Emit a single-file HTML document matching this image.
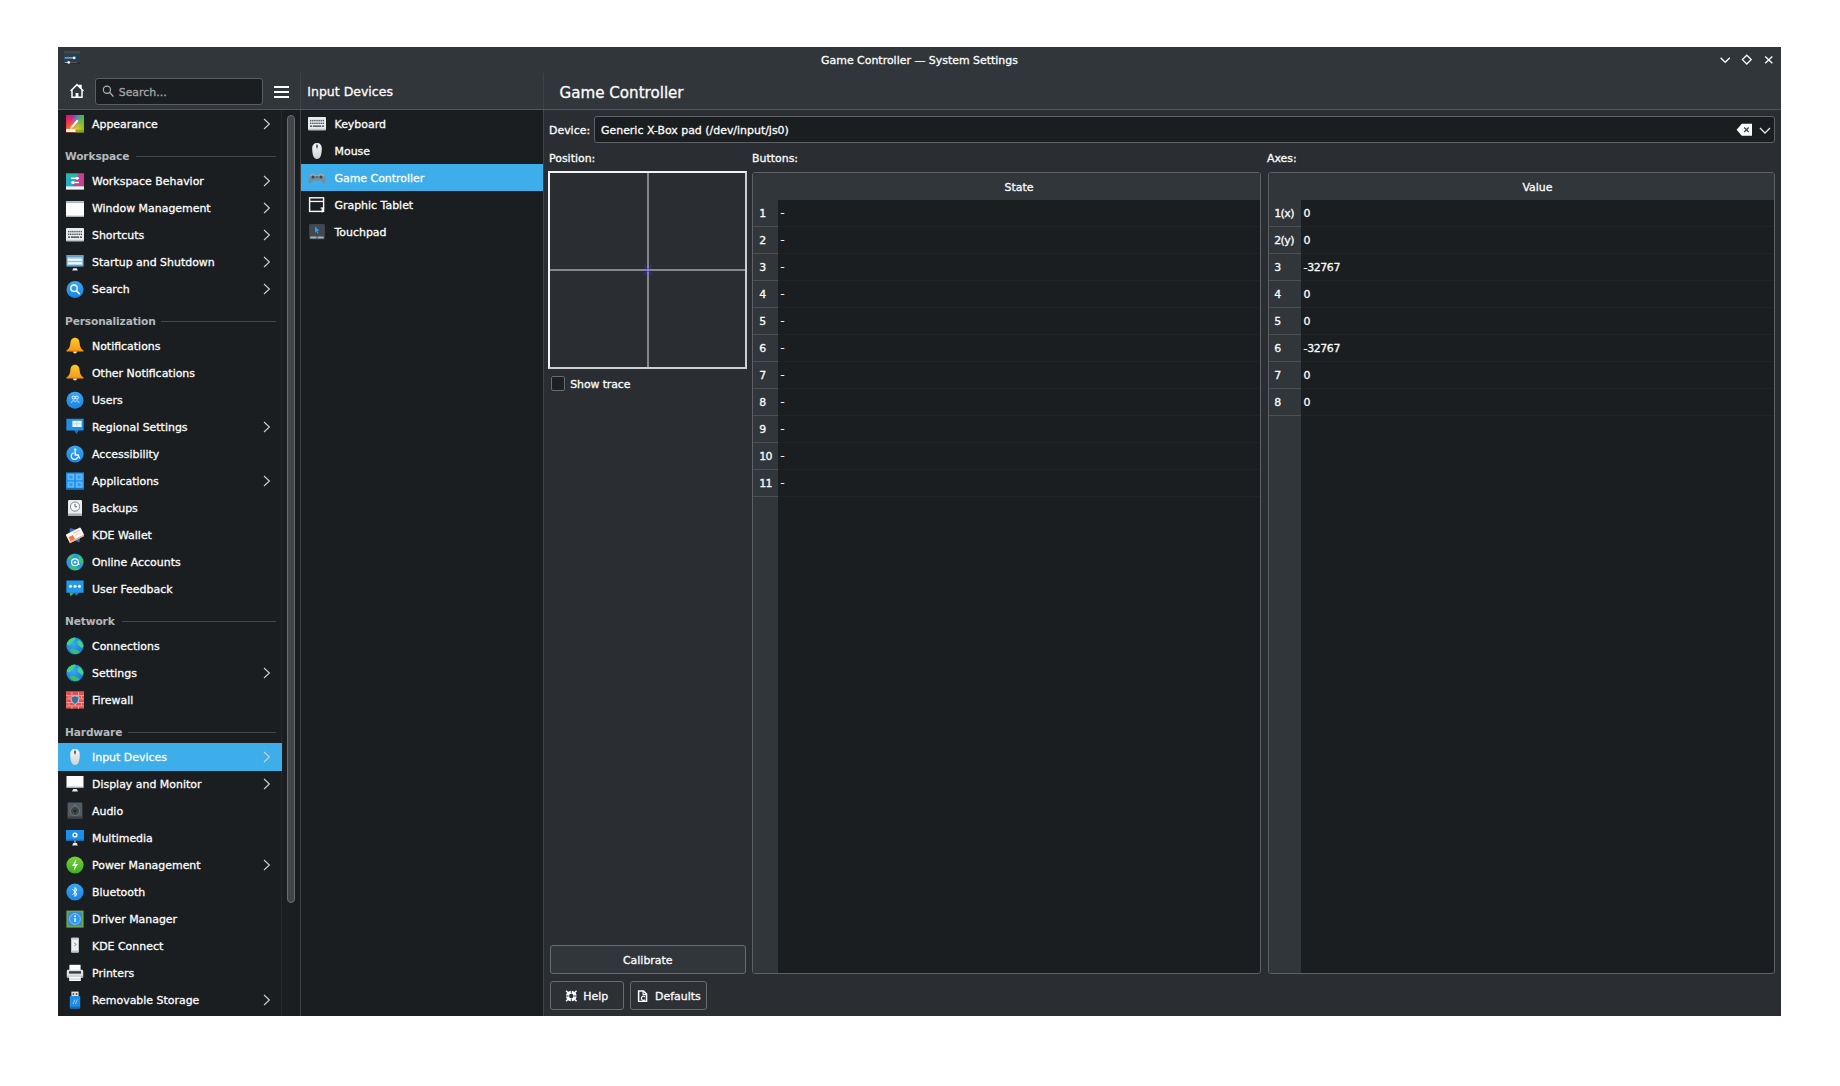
<!DOCTYPE html><html><head><meta charset="utf-8"><title>Game Controller — System Settings</title><style>
*{box-sizing:border-box;margin:0;padding:0}
html,body{width:1840px;height:1086px;background:#fff;overflow:hidden}
body{font-family:"DejaVu Sans","Liberation Sans",sans-serif;font-size:10.95px;color:#fcfcfc;position:relative}
.abs{position:absolute}
#win{position:absolute;left:58px;top:47px;width:1723px;height:969px;background:#2a2e32;overflow:hidden}
.t{position:absolute;white-space:nowrap;line-height:16px;height:16px;-webkit-text-stroke:0.3px}
.row{position:absolute;left:0;height:27px}
.row svg{position:absolute;left:8px;top:4.9px}
.row .t{left:34px;top:6.75px}
.row svg.chev{position:absolute;top:7.6px}
.sec{position:absolute;left:0;height:30px}
.sec .t{left:7px;top:12.25px;font-weight:bold;font-size:10.65px;letter-spacing:-0.15px;color:#b4b8bb;-webkit-text-stroke:0}
.sec i{position:absolute;top:19px;height:1px;background:#43464a;right:6px}
.sel{background:#3daee9}
.btn{position:absolute;border:1px solid #686b6f;border-radius:3px;background:#31363b}
</style></head><body>
<svg width="0" height="0" style="position:absolute"><defs>
<linearGradient id="gApTop" x1="0" y1="0" x2="1" y2="0"><stop offset="0" stop-color="#ea0f7e"/><stop offset=".3" stop-color="#d51a8c"/><stop offset=".5" stop-color="#7c55c6"/><stop offset=".68" stop-color="#4f8fb0"/><stop offset=".85" stop-color="#4bb24e"/><stop offset="1" stop-color="#58b846"/></linearGradient>
<linearGradient id="gApBot" x1="0" y1="0" x2="1" y2="0"><stop offset="0" stop-color="#f4541f"/><stop offset=".35" stop-color="#f28a1a"/><stop offset=".6" stop-color="#e9cc18"/><stop offset="1" stop-color="#86c425"/></linearGradient>
<linearGradient id="gApM" x1="0" y1="0" x2="0" y2="1"><stop offset="0.1" stop-color="#000"/><stop offset=".75" stop-color="#fff"/></linearGradient>
<mask id="mAp" maskUnits="userSpaceOnUse" x="0" y="0" width="18" height="18"><rect x="0" y="0" width="18" height="18" fill="url(#gApM)"/></mask>

<linearGradient id="gBlueC" x1="0" y1="0" x2="0" y2="1"><stop offset="0" stop-color="#3aa6f2"/><stop offset="1" stop-color="#1b84e6"/></linearGradient>

<linearGradient id="gBell" x1="0" y1="0" x2="0" y2="1"><stop offset="0" stop-color="#fdc92b"/><stop offset="1" stop-color="#f59a18"/></linearGradient>

<radialGradient id="gGlobe" cx=".4" cy=".35" r=".75"><stop offset="0" stop-color="#38a9f5"/><stop offset="1" stop-color="#1671d4"/></radialGradient>

<linearGradient id="gMouse" x1="0" y1="0" x2="0" y2="1"><stop offset="0" stop-color="#f7f7f8"/><stop offset="1" stop-color="#cfd3d6"/></linearGradient>

<linearGradient id="gGreenC" x1="0" y1="0" x2="0" y2="1"><stop offset="0" stop-color="#76d23a"/><stop offset="1" stop-color="#3fae22"/></linearGradient>
</defs></svg>
<div id="win">
<div class="abs" style="left:0;top:0;width:1723px;height:63px;background:#31363b"></div>
<div class="abs" style="left:0;top:62px;width:1723px;height:1px;background:#53575b"></div>
<div class="t" style="left:0;width:1723px;text-align:center;top:5.75px">Game Controller — System Settings</div>
<svg class="abs" style="left:5.5px;top:3.6px" width="16.3" height="13.5" viewBox="0 0 16.3 13.5"><rect x="0" y="0" width="16.3" height="13.5" rx="1" fill="#22404f"/><rect x="0" y="0" width="16.3" height="2.6" rx=".8" fill="#454748"/><rect x="0" y="11.3" width="16.3" height="2.2" rx=".8" fill="#1c2f3a"/><rect x="0.7" y="6.4" width="9.6" height="1" fill="#b9d6e6"/><circle cx="10.2" cy="6.9" r="1.35" fill="#eef6fa"/><rect x="0.7" y="10.95" width="5" height="1" fill="#7fb3c6"/><rect x="5" y="10.95" width="8" height="1" fill="#6d5456"/><circle cx="4.7" cy="11.45" r="1.35" fill="#eef6fa"/></svg>
<svg class="abs" style="left:1658px;top:5px" width="62" height="16" viewBox="0 0 62 16"><path d="M4.6 5.7 L9.2 10.3 L13.8 5.7" fill="none" stroke="#fcfcfc" stroke-width="1.3"/><path d="M30.8 3.2 L35.2 7.6 L30.8 12 L26.4 7.6 Z" fill="none" stroke="#fcfcfc" stroke-width="1.3"/><path d="M49.2 4.6 L56.3 11.2 M56.3 4.6 L49.2 11.2" fill="none" stroke="#fcfcfc" stroke-width="1.35"/></svg>
<svg class="abs" style="left:11px;top:36px" width="16" height="16" viewBox="0 0 16 16"><path d="M1.6 8 L8 1.6 L14.4 8 M3 7 V14.2 H13 V7 M10.6 3.8 V2.4 H12 V5.2" fill="none" stroke="#fcfcfc" stroke-width="1.5" stroke-linejoin="miter"/><rect x="6.6" y="10" width="2.8" height="4" fill="#fcfcfc"/></svg>
<div class="abs" style="left:37px;top:31px;width:168px;height:27px;background:#1b1e20;border:1px solid #5a5d61;border-radius:3px"></div>
<svg class="abs" style="left:44px;top:37.6px" width="13" height="13" viewBox="0 0 13 13"><circle cx="4.9" cy="4.7" r="3.6" fill="none" stroke="#afb2b4" stroke-width="1.15"/><path d="M7.5 7.3 L11.5 11.6" stroke="#afb2b4" stroke-width="1.3"/></svg>
<div class="t" style="left:60.7px;top:37.75px;color:#a4a7a9">Search...</div>
<div class="abs" style="left:216px;top:39px;width:15px;height:2px;background:#fcfcfc;box-shadow:0 5px 0 #fcfcfc,0 10px 0 #fcfcfc"></div>
<div class="abs" style="left:242px;top:26px;width:1px;height:36px;background:#3e4247"></div>
<div class="abs" style="left:485px;top:26px;width:1px;height:36px;background:#3e4247"></div>
<div class="t" style="left:249.3px;top:34.75px;font-size:12.5px;line-height:20px;height:20px">Input Devices</div>
<div class="t" style="left:501.6px;top:34.25px;font-size:15.1px;line-height:24px;height:24px">Game Controller</div>
<div class="abs" style="left:0;top:63px;width:242px;height:906px;background:#1b1e20"></div>
<div class="abs" style="left:223px;top:63px;width:1px;height:906px;background:#272b2e"></div>
<div class="abs" style="left:242px;top:63px;width:1px;height:906px;background:#404448"></div>
<div class="abs" style="left:229px;top:68px;width:8px;height:788px;border:1px solid #686c70;border-radius:4px;background:#414548"></div>
<div class="row" style="top:63px;width:224px"><svg width="18" height="18" viewBox="0 0 18 18" style="">
<rect x="0" y="0" width="18" height="17.3" fill="url(#gApTop)"/>
<rect x="0" y="0" width="18" height="17.3" fill="url(#gApBot)" mask="url(#mAp)"/>
<path d="M5.4 11 L11 4.7 L12.5 6 L7 12.4 Z" fill="#fff"/>
<path d="M4.2 13.4 Q4.7 11 6 11.1 Q7.6 12.6 5.6 13.7 Z" fill="#fff0d8"/>
<rect x="0.2" y="13.9" width="9.4" height="3.1" fill="#fff" opacity=".92"/>
<rect x="9.6" y="14.6" width="8.4" height="2.7" fill="#8e9a1c" opacity=".75"/>
</svg><span class="t">Appearance</span><svg class="chev" style="left:205px" width="8" height="12" viewBox="0 0 8 12"><path d="M1 1 L6.4 6 L1 11" fill="none" stroke="#cfd1d3" stroke-width="1.1"/></svg></div>
<div class="sec" style="top:90px;width:224px"><span class="t">Workspace</span><i style="left:77.5px"></i></div>
<div class="row" style="top:120px;width:224px"><svg width="18" height="18" viewBox="0 0 18 18" style="">
<rect x="0" y="1.6" width="18" height="15.9" fill="#2aa9c4"/>
<path d="M12.4 1.6 H18 V14.4 H6.4 Z" fill="#c4428f"/>
<path d="M0 1.6 H12.4 L9.6 6 H0 Z" fill="#2bb7a8"/>
<rect x="0" y="14.4" width="18" height="3.1" fill="#f1f3f5"/>
<rect x="5" y="5.6" width="8" height="1.4" fill="#fff"/><circle cx="11" cy="6.3" r="1.5" fill="#fff"/>
<rect x="5" y="9.8" width="8" height="1.4" fill="#fff"/><circle cx="7" cy="10.5" r="1.5" fill="#fff"/>
</svg><span class="t">Workspace Behavior</span><svg class="chev" style="left:205px" width="8" height="12" viewBox="0 0 8 12"><path d="M1 1 L6.4 6 L1 11" fill="none" stroke="#cfd1d3" stroke-width="1.1"/></svg></div>
<div class="row" style="top:147px;width:224px"><svg width="18" height="18" viewBox="0 0 18 18" style="">
<rect x="0" y="2.2" width="18" height="15.3" fill="#fdfdfd"/>
<rect x="0" y="2.2" width="18" height="1.9" fill="#a9bccb"/>
<rect x="0" y="16.3" width="18" height="1.2" fill="#d0d6db"/>
</svg><span class="t">Window Management</span><svg class="chev" style="left:205px" width="8" height="12" viewBox="0 0 8 12"><path d="M1 1 L6.4 6 L1 11" fill="none" stroke="#cfd1d3" stroke-width="1.1"/></svg></div>
<div class="row" style="top:174px;width:224px"><svg width="18" height="18" viewBox="0 0 18 18" style="">
<rect x="0" y="2" width="18" height="13.2" rx="1" fill="#e9ecee"/>
<rect x="0" y="13.8" width="18" height="1.4" rx=".6" fill="#bcc3c8"/>
<rect x="2" y="4.9" width="1.4" height="1.4" fill="#4d5459"/><rect x="4.1" y="4.9" width="1.4" height="1.4" fill="#4d5459"/><rect x="6.2" y="4.9" width="1.4" height="1.4" fill="#4d5459"/><rect x="8.3" y="4.9" width="1.4" height="1.4" fill="#4d5459"/><rect x="10.4" y="4.9" width="1.4" height="1.4" fill="#4d5459"/><rect x="12.5" y="4.9" width="1.4" height="1.4" fill="#4d5459"/><rect x="14.6" y="4.9" width="1.4" height="1.4" fill="#4d5459"/><rect x="2" y="7.6" width="1.4" height="1.4" fill="#4d5459"/><rect x="4.1" y="7.6" width="1.4" height="1.4" fill="#4d5459"/><rect x="6.2" y="7.6" width="1.4" height="1.4" fill="#4d5459"/><rect x="8.3" y="7.6" width="1.4" height="1.4" fill="#4d5459"/><rect x="10.4" y="7.6" width="1.4" height="1.4" fill="#4d5459"/><rect x="12.5" y="7.6" width="1.4" height="1.4" fill="#4d5459"/><rect x="14.6" y="7.6" width="1.4" height="1.4" fill="#4d5459"/>
<rect x="2" y="10.4" width="2.2" height="1.5" fill="#4d5459"/><rect x="5" y="10.4" width="8" height="1.5" fill="#4d5459"/><rect x="13.8" y="10.4" width="2.2" height="1.5" fill="#4d5459"/>
</svg><span class="t">Shortcuts</span><svg class="chev" style="left:205px" width="8" height="12" viewBox="0 0 8 12"><path d="M1 1 L6.4 6 L1 11" fill="none" stroke="#cfd1d3" stroke-width="1.1"/></svg></div>
<div class="row" style="top:201px;width:224px"><svg width="18" height="18" viewBox="0 0 18 18" style="">
<rect x="0.5" y="2" width="17" height="11.6" rx=".8" fill="#8ec4e8"/>
<rect x="0.5" y="2" width="17" height="2" fill="#6c9dc2"/>
<rect x="2" y="5.6" width="14" height="2.2" fill="#f1f7fb"/>
<rect x="2" y="9.2" width="14" height="2.2" fill="#f1f7fb"/>
<rect x="0.5" y="12.6" width="17" height="1" fill="#3f6f94"/>
<path d="M7.2 15.2 H10.8 L11.8 17.4 H6.2 Z" fill="#e4e8eb"/>
</svg><span class="t">Startup and Shutdown</span><svg class="chev" style="left:205px" width="8" height="12" viewBox="0 0 8 12"><path d="M1 1 L6.4 6 L1 11" fill="none" stroke="#cfd1d3" stroke-width="1.1"/></svg></div>
<div class="row" style="top:228px;width:224px"><svg width="18" height="18" viewBox="0 0 18 18" style="">
<circle cx="9" cy="9.4" r="8.5" fill="url(#gBlueC)"/>
<circle cx="8" cy="8.2" r="3.2" fill="none" stroke="#fff" stroke-width="1.3"/>
<path d="M10.3 10.6 L13.4 13.8" stroke="#fff" stroke-width="1.6" stroke-linecap="round"/>
</svg><span class="t">Search</span><svg class="chev" style="left:205px" width="8" height="12" viewBox="0 0 8 12"><path d="M1 1 L6.4 6 L1 11" fill="none" stroke="#cfd1d3" stroke-width="1.1"/></svg></div>
<div class="sec" style="top:255px;width:224px"><span class="t">Personalization</span><i style="left:103px"></i></div>
<div class="row" style="top:285px;width:224px"><svg width="18" height="18" viewBox="0 0 18 18" style="">
<path d="M9 0.8 C6 0.8 4.6 3.2 4.4 6 C4.2 9.4 3.2 11.4 0.6 13.4 L0.6 14.2 H17.4 L17.4 13.4 C14.8 11.4 13.8 9.4 13.6 6 C13.4 3.2 12 0.8 9 0.8 Z" fill="url(#gBell)"/>
<path d="M0.6 13.2 H17.4 V14.4 H0.6 Z" fill="#f08a12"/>
<path d="M7 14.6 H11 A2 2 0 0 1 7 14.6 Z" fill="#f6e6cf"/>
</svg><span class="t">Notifications</span></div>
<div class="row" style="top:312px;width:224px"><svg width="18" height="18" viewBox="0 0 18 18" style="">
<path d="M9 0.8 C6 0.8 4.6 3.2 4.4 6 C4.2 9.4 3.2 11.4 0.6 13.4 L0.6 14.2 H17.4 L17.4 13.4 C14.8 11.4 13.8 9.4 13.6 6 C13.4 3.2 12 0.8 9 0.8 Z" fill="url(#gBell)"/>
<path d="M0.6 13.2 H17.4 V14.4 H0.6 Z" fill="#f08a12"/>
<path d="M7 14.6 H11 A2 2 0 0 1 7 14.6 Z" fill="#f6e6cf"/>
</svg><span class="t">Other Notifications</span></div>
<div class="row" style="top:339px;width:224px"><svg width="18" height="18" viewBox="0 0 18 18" style="">
<circle cx="9" cy="9.2" r="8.5" fill="url(#gBlueC)"/>
<circle cx="7.6" cy="6.6" r="1.5" fill="none" stroke="#fff" stroke-width=".9"/>
<circle cx="10.8" cy="6.6" r="1.5" fill="none" stroke="#fff" stroke-width=".9"/>
<path d="M5.4 11.8 C5.6 9.4 8.8 9.4 9.2 10.8 C9.6 9.4 12.8 9.4 13 11.8" fill="none" stroke="#cfe8ff" stroke-width=".9"/>
</svg><span class="t">Users</span></div>
<div class="row" style="top:366px;width:224px"><svg width="18" height="18" viewBox="0 0 18 18" style="">
<path d="M0.4 0.8 H17.6 V12.4 H12.2 L10.4 15.8 L8.6 12.4 H0.4 Z" fill="#1f8fe8"/>
<path d="M10.4 15.8 L8.6 12.4 H12.2 Z" fill="#1872c4"/>
<rect x="6.4" y="2.8" width="9.2" height="6.2" fill="#f3f8fd"/>
<rect x="6.4" y="5.5" width="9.2" height=".7" fill="#9ccbf3"/><rect x="10.6" y="2.8" width=".7" height="6.2" fill="#9ccbf3"/>
</svg><span class="t">Regional Settings</span><svg class="chev" style="left:205px" width="8" height="12" viewBox="0 0 8 12"><path d="M1 1 L6.4 6 L1 11" fill="none" stroke="#cfd1d3" stroke-width="1.1"/></svg></div>
<div class="row" style="top:393px;width:224px"><svg width="18" height="18" viewBox="0 0 18 18" style="">
<circle cx="9" cy="9" r="8.6" fill="url(#gBlueC)"/>
<circle cx="9.3" cy="4.6" r="1.2" fill="#fff"/>
<path d="M9.2 6.4 V10 H12.2 L13.4 13" fill="none" stroke="#fff" stroke-width="1.3" stroke-linecap="round" stroke-linejoin="round"/>
<path d="M7.4 8 A3.3 3.3 0 1 0 11.6 12.2" fill="none" stroke="#fff" stroke-width="1.2" stroke-linecap="round"/>
</svg><span class="t">Accessibility</span></div>
<div class="row" style="top:420px;width:224px"><svg width="18" height="18" viewBox="0 0 18 18" style="">
<rect x="0" y="0.5" width="18" height="17" fill="#1d8fea"/>
<rect x="0" y="15.9" width="18" height="1.6" fill="#176fc0"/>
<rect x="1.5" y="1.9" width="6.7" height="6.3" fill="#5db7fb"/><rect x="9.8" y="1.9" width="6.7" height="6.3" fill="#5db7fb"/>
<rect x="1.5" y="9.6" width="6.7" height="6.1" fill="#5db7fb"/><rect x="9.8" y="9.6" width="6.7" height="6.1" fill="#5db7fb"/>
<rect x="3.3" y="3.6" width="3.1" height="2.9" fill="#2d9af0"/><rect x="11.6" y="3.6" width="3.1" height="2.9" fill="#2d9af0"/>
<rect x="3.3" y="11.2" width="3.1" height="2.9" fill="#2d9af0"/><rect x="11.6" y="11.2" width="3.1" height="2.9" fill="#2d9af0"/>
</svg><span class="t">Applications</span><svg class="chev" style="left:205px" width="8" height="12" viewBox="0 0 8 12"><path d="M1 1 L6.4 6 L1 11" fill="none" stroke="#cfd1d3" stroke-width="1.1"/></svg></div>
<div class="row" style="top:447px;width:224px"><svg width="18" height="18" viewBox="0 0 18 18" style="">
<rect x="2" y="1" width="14" height="16" rx="1.2" fill="#e9ebec"/>
<rect x="2" y="14.6" width="14" height="2.4" rx="1" fill="#a9adb0"/>
<circle cx="9" cy="7.6" r="4.6" fill="#fcfcfc" stroke="#85898c" stroke-width="1"/>
<path d="M9 4.8 V7.8 H11.2" fill="none" stroke="#60656a" stroke-width="1"/>
</svg><span class="t">Backups</span></div>
<div class="row" style="top:474px;width:224px"><svg width="18" height="18" viewBox="0 0 18 18" style="">
<path d="M4 2 L15 5 L13.4 16.4 L3 12 Z" fill="#2c72c7"/>
<g transform="rotate(-27 9 9)">
<rect x="0.8" y="4.4" width="16.4" height="9.6" rx="1" fill="#fbfbfb"/>
<rect x="2.2" y="8" width="5" height="4.6" fill="#f47a38"/>
<rect x="8.6" y="6.4" width="6.6" height="1" fill="#f7b48c"/>
<rect x="8.6" y="9" width="6.6" height="1" fill="#d9d9d9"/>
<rect x="0.8" y="12.6" width="16.4" height="1.4" fill="#f6a26e"/>
</g>
</svg><span class="t">KDE Wallet</span></div>
<div class="row" style="top:501px;width:224px"><svg width="18" height="18" viewBox="0 0 18 18" style="">
<circle cx="9" cy="9" r="8.6" fill="#2a98e6"/>
<path d="M2 5 C4 2 7 1 9 1.2 C8 3 6 4 6 6 C4.6 8 3 7.2 2 5 Z" fill="#39c16c"/>
<path d="M12.4 2 C15 3 17 6 17.4 9 C16 12 14 11 13.4 8 C13 6 11.4 4 12.4 2 Z" fill="#39c16c"/>
<path d="M3 13.2 C5 12 8 12.4 9.6 14 C12 14.4 13 15 13.4 16.2 C10 18.4 5 17.4 3 13.2 Z" fill="#39c16c"/>
<circle cx="9" cy="9.2" r="3.4" fill="none" stroke="#fff" stroke-width="1.2"/><circle cx="9" cy="9.2" r="1.2" fill="#fff"/><path d="M12.4 9.2 V10.6 Q12.4 11.8 13.6 11.4" fill="none" stroke="#fff" stroke-width="1"/>
</svg><span class="t">Online Accounts</span></div>
<div class="row" style="top:528px;width:224px"><svg width="18" height="18" viewBox="0 0 18 18" style="">
<path d="M3.4 12.6 H8.4 L4.6 16.6 Z" fill="#3fb84a"/>
<path d="M0.4 0.4 H17.6 V12.8 H12.8 L10.4 15.6 L8.2 12.8 H0.4 Z" fill="#239ae9"/>
<path d="M10.4 15.6 L8.2 12.8 H12.8 Z" fill="#1b78c8"/>
<circle cx="4.6" cy="6.2" r="1.5" fill="#fff"/><circle cx="9" cy="6.2" r="1.5" fill="#fff"/><circle cx="13.4" cy="6.2" r="1.5" fill="#fff"/>
</svg><span class="t">User Feedback</span></div>
<div class="sec" style="top:555px;width:224px"><span class="t">Network</span><i style="left:64px"></i></div>
<div class="row" style="top:585px;width:224px"><svg width="18" height="18" viewBox="0 0 18 18" style="">
<circle cx="9" cy="9" r="8.6" fill="url(#gGlobe)"/>
<path d="M2.2 4 C4 1.8 6.4 0.8 8.6 0.6 C10 1.6 9.4 3 7.6 3.8 C6.8 5.6 5.6 6.2 4.4 7.4 C3.4 8.8 1.8 8.4 0.8 7 C1 5.8 1.6 4.8 2.2 4 Z" fill="#3ed680"/>
<path d="M12.6 3.2 C14.6 3.6 16.6 5.6 17.4 8.4 C17.2 10.6 16 11.4 14.8 10.2 C13.6 9 12 8.6 11.6 6.8 C11.2 5.2 11.4 3.8 12.6 3.2 Z" fill="#3ed680"/>
<path d="M3.6 12.4 C5.6 11.2 8.6 11.6 10 13 C12 13.4 13.4 14 13.8 15.6 C11 18 6 17.8 3.6 12.4 Z" fill="#34c06e"/>
</svg><span class="t">Connections</span></div>
<div class="row" style="top:612px;width:224px"><svg width="18" height="18" viewBox="0 0 18 18" style="">
<circle cx="9" cy="9" r="8.6" fill="url(#gGlobe)"/>
<path d="M2.2 4 C4 1.8 6.4 0.8 8.6 0.6 C10 1.6 9.4 3 7.6 3.8 C6.8 5.6 5.6 6.2 4.4 7.4 C3.4 8.8 1.8 8.4 0.8 7 C1 5.8 1.6 4.8 2.2 4 Z" fill="#3ed680"/>
<path d="M12.6 3.2 C14.6 3.6 16.6 5.6 17.4 8.4 C17.2 10.6 16 11.4 14.8 10.2 C13.6 9 12 8.6 11.6 6.8 C11.2 5.2 11.4 3.8 12.6 3.2 Z" fill="#3ed680"/>
<path d="M3.6 12.4 C5.6 11.2 8.6 11.6 10 13 C12 13.4 13.4 14 13.8 15.6 C11 18 6 17.8 3.6 12.4 Z" fill="#34c06e"/>
</svg><span class="t">Settings</span><svg class="chev" style="left:205px" width="8" height="12" viewBox="0 0 8 12"><path d="M1 1 L6.4 6 L1 11" fill="none" stroke="#cfd1d3" stroke-width="1.1"/></svg></div>
<div class="row" style="top:639px;width:224px"><svg width="18" height="18" viewBox="0 0 18 18" style="">
<rect x="0" y="0.2" width="18" height="17.4" fill="#e0524f"/>
<rect x="0" y="4.1" width="18" height=".7" fill="#f4b6b0"/><rect x="0" y="7.6" width="18" height=".7" fill="#f4b6b0"/><rect x="0" y="11.1" width="18" height=".7" fill="#f4b6b0"/><rect x="0" y="14.6" width="18" height=".7" fill="#f4b6b0"/><rect x="5.6" y="1" width=".7" height="3" fill="#f4b6b0"/><rect x="12" y="1" width=".7" height="3" fill="#f4b6b0"/><rect x="2.6" y="4.6" width=".7" height="3" fill="#f4b6b0"/><rect x="9" y="4.6" width=".7" height="3" fill="#f4b6b0"/><rect x="15" y="4.6" width=".7" height="3" fill="#f4b6b0"/><rect x="5.6" y="8.1" width=".7" height="3" fill="#f4b6b0"/><rect x="12" y="8.1" width=".7" height="3" fill="#f4b6b0"/><rect x="2.6" y="11.6" width=".7" height="3" fill="#f4b6b0"/><rect x="9" y="11.6" width=".7" height="3" fill="#f4b6b0"/><rect x="15" y="11.6" width=".7" height="3" fill="#f4b6b0"/><rect x="5.6" y="15" width=".7" height="3" fill="#f4b6b0"/><rect x="12" y="15" width=".7" height="3" fill="#f4b6b0"/>
<path d="M9 4.6 C10.6 5.6 11.8 5.8 13 5.8 C13 9.6 11.6 12 9 13.4 C6.4 12 5 9.6 5 5.8 C6.2 5.8 7.4 5.6 9 4.6 Z" fill="#3b6d96" stroke="#c8d6e0" stroke-width=".8"/>
</svg><span class="t">Firewall</span></div>
<div class="sec" style="top:666px;width:224px"><span class="t">Hardware</span><i style="left:70px"></i></div>
<div class="abs sel" style="left:0;top:696.4px;width:224px;height:27.2px"></div>
<div class="row" style="top:696px;width:224px"><svg width="18" height="18" viewBox="0 0 18 18" style="">
<path d="M9 0.9 C11.8 0.9 13.8 2.9 13.8 6.2 C13.8 9.8 13.3 12.6 12.5 14.6 C11.9 16.2 10.5 16.9 9 16.9 C7.5 16.9 6.1 16.2 5.5 14.6 C4.7 12.6 4.2 9.8 4.2 6.2 C4.2 2.9 6.2 0.9 9 0.9 Z" fill="url(#gMouse)"/>
<path d="M8.6 1 H9.4 V7.6 H8.6 Z" fill="#b9bec2"/>
<rect x="8.1" y="2.4" width="1.8" height="3.6" rx=".9" fill="#555d63"/>
</svg><span class="t">Input Devices</span><svg class="chev" style="left:205px" width="8" height="12" viewBox="0 0 8 12"><path d="M1 1 L6.4 6 L1 11" fill="none" stroke="#cfd1d3" stroke-width="1.1"/></svg></div>
<div class="row" style="top:723px;width:224px"><svg width="18" height="18" viewBox="0 0 18 18" style="">
<rect x="0.5" y="1" width="17" height="11.6" rx=".6" fill="#fcfcfc"/>
<rect x="0.5" y="11.4" width="17" height="1.2" fill="#c3c8cc"/>
<path d="M7.2 14 H10.8 L12 16.4 H6 Z" fill="#e4e8eb"/>
</svg><span class="t">Display and Monitor</span><svg class="chev" style="left:205px" width="8" height="12" viewBox="0 0 8 12"><path d="M1 1 L6.4 6 L1 11" fill="none" stroke="#cfd1d3" stroke-width="1.1"/></svg></div>
<div class="row" style="top:750px;width:224px"><svg width="18" height="18" viewBox="0 0 18 18" style="">
<rect x="1.6" y="0.6" width="14.8" height="16" rx="1.2" fill="#545b61"/>
<rect x="1.6" y="14.6" width="14.8" height="2" rx="1" fill="#3b4146"/>
<circle cx="9" cy="9" r="4.6" fill="#3f464b" stroke="#6d747a" stroke-width=".9"/>
<circle cx="9" cy="9" r="1.7" fill="#23272a"/>
<circle cx="9" cy="2.8" r=".8" fill="#7b8389"/>
</svg><span class="t">Audio</span></div>
<div class="row" style="top:777px;width:224px"><svg width="18" height="18" viewBox="0 0 18 18" style="">
<rect x="0" y="1" width="18" height="10.6" fill="#1d8ee9"/>
<rect x="0" y="10.6" width="18" height="1" fill="#176fc0"/>
<circle cx="9" cy="6" r="2.6" fill="#fcfcfc"/>
<path d="M8.2 4.7 L10.6 6 L8.2 7.3 Z" fill="#2b3c4c"/>
<rect x="8.5" y="11.6" width="1" height="2.6" fill="#dfe3e6"/>
<path d="M7.2 14 H10.8 L11.8 16.6 H6.2 Z" fill="#e4e8eb"/>
</svg><span class="t">Multimedia</span></div>
<div class="row" style="top:804px;width:224px"><svg width="18" height="18" viewBox="0 0 18 18" style="">
<circle cx="9" cy="9" r="8.6" fill="url(#gGreenC)"/>
<path d="M10.4 3 L6 10 H8.8 L7.6 15 L12 8 H9.2 Z" fill="#fff"/>
</svg><span class="t">Power Management</span><svg class="chev" style="left:205px" width="8" height="12" viewBox="0 0 8 12"><path d="M1 1 L6.4 6 L1 11" fill="none" stroke="#cfd1d3" stroke-width="1.1"/></svg></div>
<div class="row" style="top:831px;width:224px"><svg width="18" height="18" viewBox="0 0 18 18" style="">
<circle cx="9" cy="9" r="8.6" fill="url(#gBlueC)"/>
<path d="M6.8 6.4 L11 11 L9 13.4 V4.6 L11 7 L6.8 11.6" fill="none" stroke="#fff" stroke-width="1" stroke-linejoin="round" stroke-linecap="round"/>
</svg><span class="t">Bluetooth</span></div>
<div class="row" style="top:858px;width:224px"><svg width="18" height="18" viewBox="0 0 18 18" style="">
<rect x="0.4" y="0.6" width="17.2" height="17" fill="#6aa84a"/>
<rect x="2.2" y="2.2" width="13.6" height="13.6" fill="#3c8acb"/>
<circle cx="9" cy="9" r="5.4" fill="#2f9af1" stroke="#8fd0ff" stroke-width=".8"/>
<rect x="8.4" y="8" width="1.3" height="4" fill="#fff"/><circle cx="9.05" cy="6.2" r=".9" fill="#fff"/>
</svg><span class="t">Driver Manager</span></div>
<div class="row" style="top:885px;width:224px"><svg width="18" height="18" viewBox="0 0 18 18" style="">
<rect x="5.2" y="0.8" width="7.6" height="14.8" rx=".8" fill="#eef0f1"/>
<rect x="5.2" y="0.8" width="7.6" height="1.8" fill="#c9cdd0"/>
<rect x="5.2" y="13.6" width="7.6" height="2" rx=".6" fill="#bfc4c7"/>
<path d="M8 5.8 L10.4 7.4 L8 9" fill="none" stroke="#8a9095" stroke-width=".9"/>
</svg><span class="t">KDE Connect</span></div>
<div class="row" style="top:912px;width:224px"><svg width="18" height="18" viewBox="0 0 18 18" style="">
<rect x="3.4" y="0.8" width="11.2" height="6" fill="#fcfcfc"/>
<rect x="0.8" y="5.8" width="16.4" height="8" rx="1.2" fill="#dfe2e4"/>
<rect x="3" y="7.2" width="12" height="2.4" fill="#343a3f"/>
<rect x="0.8" y="11.8" width="16.4" height="2" rx="1" fill="#b4b9bd"/>
<rect x="3.2" y="12.6" width="11.6" height="4.4" fill="#fcfcfc"/>
<rect x="3.2" y="14.6" width="11.6" height="1" fill="#c9cdd0"/>
</svg><span class="t">Printers</span></div>
<div class="row" style="top:939px;width:224px"><svg width="18" height="18" viewBox="0 0 18 18" style="">
<rect x="5.4" y="0.6" width="7.2" height="5" fill="#e6e2da"/>
<rect x="6.6" y="2" width="1.6" height="2" fill="#6b6256"/><rect x="9.8" y="2" width="1.6" height="2" fill="#6b6256"/>
<rect x="3.8" y="5" width="10.4" height="12.4" rx=".8" fill="#1f8eea"/>
<rect x="3.8" y="15.6" width="10.4" height="1.8" rx=".8" fill="#176fc0"/>
<path d="M7 13 L9 8.6 M9.4 13 L11.4 8.6" stroke="#9dd2ff" stroke-width=".9"/>
</svg><span class="t">Removable Storage</span><svg class="chev" style="left:205px" width="8" height="12" viewBox="0 0 8 12"><path d="M1 1 L6.4 6 L1 11" fill="none" stroke="#cfd1d3" stroke-width="1.1"/></svg></div>
<div class="abs" style="left:243px;top:63px;width:242px;height:906px;background:#1b1e20"></div>
<div class="abs" style="left:485px;top:63px;width:1px;height:906px;background:#404448"></div>
<div class="row" style="left:243px;top:63px;width:242.29999999999995px"><svg width="18" height="18" viewBox="0 0 18 18" style="left:7px">
<rect x="0" y="2" width="18" height="13.2" rx="1" fill="#e9ecee"/>
<rect x="0" y="13.8" width="18" height="1.4" rx=".6" fill="#bcc3c8"/>
<rect x="2" y="4.9" width="1.4" height="1.4" fill="#4d5459"/><rect x="4.1" y="4.9" width="1.4" height="1.4" fill="#4d5459"/><rect x="6.2" y="4.9" width="1.4" height="1.4" fill="#4d5459"/><rect x="8.3" y="4.9" width="1.4" height="1.4" fill="#4d5459"/><rect x="10.4" y="4.9" width="1.4" height="1.4" fill="#4d5459"/><rect x="12.5" y="4.9" width="1.4" height="1.4" fill="#4d5459"/><rect x="14.6" y="4.9" width="1.4" height="1.4" fill="#4d5459"/><rect x="2" y="7.6" width="1.4" height="1.4" fill="#4d5459"/><rect x="4.1" y="7.6" width="1.4" height="1.4" fill="#4d5459"/><rect x="6.2" y="7.6" width="1.4" height="1.4" fill="#4d5459"/><rect x="8.3" y="7.6" width="1.4" height="1.4" fill="#4d5459"/><rect x="10.4" y="7.6" width="1.4" height="1.4" fill="#4d5459"/><rect x="12.5" y="7.6" width="1.4" height="1.4" fill="#4d5459"/><rect x="14.6" y="7.6" width="1.4" height="1.4" fill="#4d5459"/>
<rect x="2" y="10.4" width="2.2" height="1.5" fill="#4d5459"/><rect x="5" y="10.4" width="8" height="1.5" fill="#4d5459"/><rect x="13.8" y="10.4" width="2.2" height="1.5" fill="#4d5459"/>
</svg><span class="t" style="left:33.5px">Keyboard</span></div>
<div class="row" style="left:243px;top:90px;width:242.29999999999995px"><svg width="18" height="18" viewBox="0 0 18 18" style="left:7px">
<path d="M9 0.9 C11.8 0.9 13.8 2.9 13.8 6.2 C13.8 9.8 13.3 12.6 12.5 14.6 C11.9 16.2 10.5 16.9 9 16.9 C7.5 16.9 6.1 16.2 5.5 14.6 C4.7 12.6 4.2 9.8 4.2 6.2 C4.2 2.9 6.2 0.9 9 0.9 Z" fill="url(#gMouse)"/>
<path d="M8.6 1 H9.4 V7.6 H8.6 Z" fill="#b9bec2"/>
<rect x="8.1" y="2.4" width="1.8" height="3.6" rx=".9" fill="#555d63"/>
</svg><span class="t" style="left:33.5px">Mouse</span></div>
<div class="row sel" style="left:243px;top:117px;width:242.29999999999995px"><svg width="18" height="18" viewBox="0 0 18 18" style="left:7px">
<path d="M4.4 4.6 H6.8 L7.6 6 H10.4 L11.2 4.6 H13.6 C15.2 4.6 16 6 16.4 8 L17.4 12.6 C17.8 14.6 15.6 15.2 14.6 13.6 L13.2 11.4 H4.8 L3.4 13.6 C2.4 15.2 0.2 14.6 0.6 12.6 L1.6 8 C2 6 2.8 4.6 4.4 4.6 Z" fill="#7d8a93"/>
<path d="M4.4 4.6 H6.8 L7.6 6 H10.4 L11.2 4.6 H13.6 C15.2 4.6 16 6 16.2 7.4 H1.8 C2 6 2.8 4.6 4.4 4.6 Z" fill="#9aa6ae"/>
<circle cx="5" cy="8" r="1.5" fill="#3b4349"/><circle cx="13" cy="8" r="1.5" fill="#3b4349"/>
<rect x="7.6" y="7.4" width="2.8" height="1.2" fill="#4d565c"/>
</svg><span class="t" style="left:33.5px">Game Controller</span></div>
<div class="row" style="left:243px;top:144px;width:242.29999999999995px"><svg width="18" height="18" viewBox="0 0 18 18" style="left:7px">
<rect x="1.6" y="1.8" width="14" height="13.6" fill="none" stroke="#fcfcfc" stroke-width="1.4"/>
<rect x="1.6" y="4.8" width="14" height="1.3" fill="#fcfcfc"/>
<rect x="12.6" y="11.4" width="3.6" height="1.2" fill="#fcfcfc"/><rect x="13.6" y="12" width="1.4" height="4.4" fill="#fcfcfc"/>
</svg><span class="t" style="left:33.5px">Graphic Tablet</span></div>
<div class="row" style="left:243px;top:171px;width:242.29999999999995px"><svg width="18" height="18" viewBox="0 0 18 18" style="left:7px">
<rect x="1.4" y="1.2" width="15.2" height="15" rx="1" fill="#4b5359"/>
<rect x="1.4" y="1.2" width="15.2" height="11.6" rx="1" fill="#414950"/>
<rect x="2.4" y="13.6" width="6" height="1.8" fill="#aab2b8"/><rect x="9.6" y="13.6" width="6" height="1.8" fill="#aab2b8"/>
<path d="M7 3.6 L11.4 7.6 L9.4 7.9 L10.6 10.4 L9.6 10.9 L8.4 8.4 L7 9.8 Z" fill="#2f9af1"/>
</svg><span class="t" style="left:33.5px">Touchpad</span></div>
<div class="t" style="left:491px;top:75.75px">Device:</div>
<div class="abs" style="left:536px;top:69px;width:1181px;height:27px;background:#1b1e20;border:1px solid #5e6165;border-radius:3px"></div>
<div class="t" style="left:543px;top:75.75px">Generic X-Box pad (/dev/input/js0)</div>
<svg class="abs" style="left:1678px;top:76px" width="17" height="13" viewBox="0 0 17 13"><path d="M5.8 0.7 H16 V12.7 H5.8 L0.6 6.7 Z" fill="#fcfcfc"/><path d="M8.2 4.5 L12.7 9 M12.7 4.5 L8.2 9" stroke="#3a3e42" stroke-width="1.25"/></svg>
<svg class="abs" style="left:1701px;top:79px" width="12" height="9" viewBox="0 0 12 9"><path d="M1 2 L6 7 L11 2" fill="none" stroke="#e6e7e8" stroke-width="1.3"/></svg>
<div class="t" style="left:491px;top:103.75px">Position:</div>
<div class="t" style="left:694px;top:103.75px">Buttons:</div>
<div class="t" style="left:1209px;top:103.75px">Axes:</div>
<div class="abs" style="left:490px;top:124px;width:199px;height:198px;border:2px solid;border-color:#f2f3f4 #cdd0d3 #cdd0d3 #f2f3f4"></div>
<div class="abs" style="left:589px;top:126px;width:2px;height:194px;background:#85878a"></div>
<div class="abs" style="left:492px;top:222px;width:195px;height:2px;background:#85878a"></div>
<svg class="abs" style="left:584px;top:217px" width="12" height="12" viewBox="0 0 12 12"><path d="M2 1 L10 11 M10 1 L2 11" stroke="#2d2dc4" stroke-width="1.2"/><rect x="5" y="5" width="2" height="2" fill="#8f86f6"/></svg>
<div class="abs" style="left:493px;top:329.4px;width:14px;height:14.4px;background:#1e2124;border:1px solid #676b6f;border-radius:2px"></div>
<div class="t" style="left:512.3px;top:329.75px;letter-spacing:-0.12px">Show trace</div>
<div class="abs" style="left:694px;top:125px;width:509px;height:802px;background:#1b1e20;border:1px solid #5e6165;border-radius:3px;overflow:hidden">
<div class="abs" style="left:0;top:0;width:509px;height:27px;background:#31363b"></div>
<div class="abs" style="left:0;top:0;width:25px;height:802px;background:#31363b"></div>
<div class="t" style="left:25px;width:482px;text-align:center;top:6.75px">State</div>
<div class="t" style="left:6.2px;top:32.75px">1</div>
<div class="t" style="left:27.6px;top:31.75px">-</div>
<div class="abs" style="left:0;top:53px;width:25px;height:1px;background:#4c5054"></div>
<div class="abs" style="left:25px;top:53px;width:509px;height:1px;background:#212427"></div>
<div class="t" style="left:6.2px;top:59.75px">2</div>
<div class="t" style="left:27.6px;top:58.75px">-</div>
<div class="abs" style="left:0;top:80px;width:25px;height:1px;background:#4c5054"></div>
<div class="abs" style="left:25px;top:80px;width:509px;height:1px;background:#212427"></div>
<div class="t" style="left:6.2px;top:86.75px">3</div>
<div class="t" style="left:27.6px;top:85.75px">-</div>
<div class="abs" style="left:0;top:107px;width:25px;height:1px;background:#4c5054"></div>
<div class="abs" style="left:25px;top:107px;width:509px;height:1px;background:#212427"></div>
<div class="t" style="left:6.2px;top:113.75px">4</div>
<div class="t" style="left:27.6px;top:112.75px">-</div>
<div class="abs" style="left:0;top:134px;width:25px;height:1px;background:#4c5054"></div>
<div class="abs" style="left:25px;top:134px;width:509px;height:1px;background:#212427"></div>
<div class="t" style="left:6.2px;top:140.75px">5</div>
<div class="t" style="left:27.6px;top:139.75px">-</div>
<div class="abs" style="left:0;top:161px;width:25px;height:1px;background:#4c5054"></div>
<div class="abs" style="left:25px;top:161px;width:509px;height:1px;background:#212427"></div>
<div class="t" style="left:6.2px;top:167.75px">6</div>
<div class="t" style="left:27.6px;top:166.75px">-</div>
<div class="abs" style="left:0;top:188px;width:25px;height:1px;background:#4c5054"></div>
<div class="abs" style="left:25px;top:188px;width:509px;height:1px;background:#212427"></div>
<div class="t" style="left:6.2px;top:194.75px">7</div>
<div class="t" style="left:27.6px;top:193.75px">-</div>
<div class="abs" style="left:0;top:215px;width:25px;height:1px;background:#4c5054"></div>
<div class="abs" style="left:25px;top:215px;width:509px;height:1px;background:#212427"></div>
<div class="t" style="left:6.2px;top:221.75px">8</div>
<div class="t" style="left:27.6px;top:220.75px">-</div>
<div class="abs" style="left:0;top:242px;width:25px;height:1px;background:#4c5054"></div>
<div class="abs" style="left:25px;top:242px;width:509px;height:1px;background:#212427"></div>
<div class="t" style="left:6.2px;top:248.75px">9</div>
<div class="t" style="left:27.6px;top:247.75px">-</div>
<div class="abs" style="left:0;top:269px;width:25px;height:1px;background:#4c5054"></div>
<div class="abs" style="left:25px;top:269px;width:509px;height:1px;background:#212427"></div>
<div class="t" style="left:6.2px;top:275.75px;letter-spacing:-0.55px">10</div>
<div class="t" style="left:27.6px;top:274.75px">-</div>
<div class="abs" style="left:0;top:296px;width:25px;height:1px;background:#4c5054"></div>
<div class="abs" style="left:25px;top:296px;width:509px;height:1px;background:#212427"></div>
<div class="t" style="left:6.2px;top:302.75px;letter-spacing:-0.55px">11</div>
<div class="t" style="left:27.6px;top:301.75px">-</div>
<div class="abs" style="left:0;top:323px;width:25px;height:1px;background:#4c5054"></div>
<div class="abs" style="left:25px;top:323px;width:509px;height:1px;background:#212427"></div>
</div>
<div class="abs" style="left:1210px;top:125px;width:507px;height:802px;background:#1b1e20;border:1px solid #5e6165;border-radius:3px;overflow:hidden">
<div class="abs" style="left:0;top:0;width:507px;height:27px;background:#31363b"></div>
<div class="abs" style="left:0;top:0;width:32px;height:802px;background:#31363b"></div>
<div class="t" style="left:32px;width:473px;text-align:center;top:6.75px">Value</div>
<div class="t" style="left:5.2px;top:32.75px;letter-spacing:-0.55px">1(x)</div>
<div class="t" style="left:34.6px;top:32.75px">0</div>
<div class="abs" style="left:0;top:53px;width:32px;height:1px;background:#4c5054"></div>
<div class="abs" style="left:32px;top:53px;width:507px;height:1px;background:#212427"></div>
<div class="t" style="left:5.2px;top:59.75px;letter-spacing:-0.55px">2(y)</div>
<div class="t" style="left:34.6px;top:59.75px">0</div>
<div class="abs" style="left:0;top:80px;width:32px;height:1px;background:#4c5054"></div>
<div class="abs" style="left:32px;top:80px;width:507px;height:1px;background:#212427"></div>
<div class="t" style="left:5.2px;top:86.75px">3</div>
<div class="t" style="left:34.6px;top:86.75px;letter-spacing:-0.4px">-32767</div>
<div class="abs" style="left:0;top:107px;width:32px;height:1px;background:#4c5054"></div>
<div class="abs" style="left:32px;top:107px;width:507px;height:1px;background:#212427"></div>
<div class="t" style="left:5.2px;top:113.75px">4</div>
<div class="t" style="left:34.6px;top:113.75px">0</div>
<div class="abs" style="left:0;top:134px;width:32px;height:1px;background:#4c5054"></div>
<div class="abs" style="left:32px;top:134px;width:507px;height:1px;background:#212427"></div>
<div class="t" style="left:5.2px;top:140.75px">5</div>
<div class="t" style="left:34.6px;top:140.75px">0</div>
<div class="abs" style="left:0;top:161px;width:32px;height:1px;background:#4c5054"></div>
<div class="abs" style="left:32px;top:161px;width:507px;height:1px;background:#212427"></div>
<div class="t" style="left:5.2px;top:167.75px">6</div>
<div class="t" style="left:34.6px;top:167.75px;letter-spacing:-0.4px">-32767</div>
<div class="abs" style="left:0;top:188px;width:32px;height:1px;background:#4c5054"></div>
<div class="abs" style="left:32px;top:188px;width:507px;height:1px;background:#212427"></div>
<div class="t" style="left:5.2px;top:194.75px">7</div>
<div class="t" style="left:34.6px;top:194.75px">0</div>
<div class="abs" style="left:0;top:215px;width:32px;height:1px;background:#4c5054"></div>
<div class="abs" style="left:32px;top:215px;width:507px;height:1px;background:#212427"></div>
<div class="t" style="left:5.2px;top:221.75px">8</div>
<div class="t" style="left:34.6px;top:221.75px">0</div>
<div class="abs" style="left:0;top:242px;width:32px;height:1px;background:#4c5054"></div>
<div class="abs" style="left:32px;top:242px;width:507px;height:1px;background:#212427"></div>
</div>
<div class="btn" style="left:491.7px;top:898.3px;width:196.2px;height:28.6px"></div>
<div class="t" style="left:491.7px;width:196.2px;text-align:center;top:905.75px">Calibrate</div>
<div class="btn" style="left:492px;top:934.3px;width:73.6px;height:28.6px;background:#2d3136"></div>
<svg class="abs" style="left:507px;top:943px" width="12.6" height="12" viewBox="0 0 13 13"><circle cx="6.5" cy="6.5" r="4.1" fill="none" stroke="#fcfcfc" stroke-width="3.4"/><path d="M0.8 0.8 L4 4 M12.2 0.8 L9 4 M0.8 12.2 L4 9 M12.2 12.2 L9 9" stroke="#fcfcfc" stroke-width="1.6"/><path d="M6.5 0 V3.6 M6.5 13 V9.4 M0 6.5 H3.6 M13 6.5 H9.4" stroke="#2d3136" stroke-width="1"/></svg>
<div class="t" style="left:525.3px;top:941.75px">Help</div>
<div class="btn" style="left:571.8px;top:934.3px;width:77px;height:28.6px;background:#2d3136"></div>
<svg class="abs" style="left:579.4px;top:942.6px" width="11.2" height="12.6" viewBox="0 0 12 14"><path d="M1.6 1.2 H7 L10.4 4.6 V12.8 H1.6 Z" fill="none" stroke="#fcfcfc" stroke-width="1.7"/><path d="M6.6 1.2 V5 H10.4" fill="none" stroke="#fcfcfc" stroke-width="1.3"/><path d="M8.6 7.6 A2.3 2.3 0 1 0 8.8 10.6" fill="none" stroke="#fcfcfc" stroke-width="1.4"/></svg>
<div class="t" style="left:597px;top:941.75px">Defaults</div>
</div></body></html>
